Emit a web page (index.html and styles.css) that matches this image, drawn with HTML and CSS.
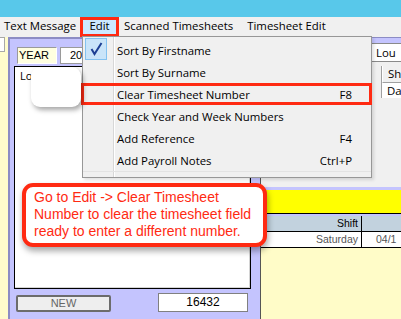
FILE: index.html
```html
<!DOCTYPE html>
<html>
<head>
<meta charset="utf-8">
<link rel="stylesheet" href="styles.css">
</head>
<body>
<div class="screen">
  <div class="titlebar"></div>
  <div class="menubar">
    <span class="mi mi1">Text Message</span>
    <span class="mi edit">Edit</span>
    <span class="mi mi3">Scanned Timesheets</span>
    <span class="mi mi4">Timesheet Edit</span>
  </div>
  <div class="main">
    <div class="strip"><div class="strip-input"></div></div>
    <div class="leftpanel">
      <div class="toprow">
        <div class="yearbox">YEAR</div>
        <div class="yearval">20</div>
      </div>
      <div class="list">
        <div class="list-item">Lo</div>
      </div>
      <div class="bottomrow">
        <div class="newbtn">NEW</div>
        <div class="numbox">16432</div>
      </div>
    </div>
    <div class="rightpanel">
      <div class="rp-top">
        <div class="rp-form"><div class="rp-input">Lou</div></div>
        <div class="grid1">
          <div class="g1-head"><div class="rowhdr"></div><div class="g1-cell hdr">Sh</div></div>
          <div class="g1-row"><div class="rowhdr"></div><div class="g1-cell">Da</div></div>
        </div>
      </div>
      <div class="splitter"></div>
      <div class="rp-bottom">
        <div class="yellowbar"></div>
        <div class="grid2">
          <div class="g2-head"><div class="c1">Shift</div><div class="c2"></div></div>
          <div class="g2-row"><div class="c1 dim">Saturday</div><div class="c2 dim">04/1</div></div>
        </div>
      </div>
    </div>
  </div>

  <div class="dropdown">
    <div class="dd-item">
      <span class="dd-icon"><span class="checkbox"><svg width="22" height="22" viewBox="0 0 22 22"><polyline points="6.5,11 9.5,16 16.5,5" fill="none" stroke="#1d3f94" stroke-width="2"/></svg></span></span>
      <span class="dd-label">Sort By Firstname</span><span class="dd-key"></span>
    </div>
    <div class="dd-item"><span class="dd-icon"></span><span class="dd-label">Sort By Surname</span><span class="dd-key"></span></div>
    <div class="dd-item clear"><span class="dd-icon"></span><span class="dd-label">Clear Timesheet Number</span><span class="dd-key">F8</span></div>
    <div class="dd-item"><span class="dd-icon"></span><span class="dd-label">Check Year and Week Numbers</span><span class="dd-key"></span></div>
    <div class="dd-item"><span class="dd-icon"></span><span class="dd-label">Add Reference</span><span class="dd-key">F4</span></div>
    <div class="dd-item"><span class="dd-icon"></span><span class="dd-label">Add Payroll Notes</span><span class="dd-key">Ctrl+P</span></div>
    <div class="dd-foot"></div>
  </div>

  <div class="bubble"></div>

  <div class="callout">
    <div class="cl">Go to Edit -&gt; Clear Timesheet</div>
    <div class="cl">Number to clear the timesheet field</div>
    <div class="cl">ready to enter a different number.</div>
  </div>
</div>
</body>
</html>
```

FILE: styles.css
```css
html, body {
  margin: 0;
  padding: 0;
}
body {
  width: 401px;
  height: 319px;
  overflow: hidden;
  font-family: "Open Sans", "Noto Sans", sans-serif;
}
.screen {
  position: relative;
  width: 401px;
  height: 319px;
  overflow: hidden;
  background: #f0f0f0;
  display: flex;
  flex-direction: column;
}
.titlebar {
  height: 17px;
  flex: none;
  background: #58c8ea;
}
.menubar {
  height: 18px;
  flex: none;
  display: flex;
  align-items: stretch;
  background: #f0f0f0;
  font-size: 11.4px;
  color: #000;
}
.mi {
  line-height: 18px;
  white-space: nowrap;
}
.mi1 { margin-left: 4px; }
.edit {
  position: relative;
  margin-left: 4px;
  width: 39px;
  text-align: center;
  background: #cce8ff;
}
.edit::after {
  content: "";
  position: absolute;
  left: 0;
  top: 0;
  right: 0;
  bottom: -2px;
  border: 3px solid #ff2a12;
}
.mi3 { margin-left: 5px; }
.mi4 { margin-left: 14px; }

.main {
  flex: 1;
  min-height: 0;
  display: flex;
  padding-top: 2px;
}
.strip {
  width: 8px;
  flex: none;
  background: #fffccc;
}
.strip-input {
  width: 5px;
  height: 15px;
  box-sizing: border-box;
  background: #fff;
  border: 1px solid #a8a8a8;
  border-left: 0;
}
.leftpanel {
  width: 252px;
  flex: none;
  box-sizing: border-box;
  border-left: 2px solid #8c8cc4;
  border-top: 2px solid #8c8cc4;
  background: #c4c4fe;
  padding: 8px 9px 0 4px;
  display: flex;
  flex-direction: column;
}
.toprow {
  display: flex;
  gap: 3px;
  margin-left: 3px;
  height: 17px;
  font-family: "Liberation Sans", sans-serif;
  font-size: 11px;
}
.yearbox {
  width: 40px;
  box-sizing: border-box;
  background: #ffffe0;
  border: 1px solid #9a9a9a;
  border-right-color: #fff;
  border-bottom-color: #fff;
  padding-left: 1px;
  line-height: 15px;
}
.yearval {
  width: 60px;
  box-sizing: border-box;
  background: #fff;
  border: 1px solid #9a9a9a;
  padding-left: 9px;
  line-height: 15px;
}
.list {
  margin-top: 2px;
  height: 223px;
  box-sizing: border-box;
  border: 1px solid #000;
  background: #fff;
  box-shadow: inset -1px -1px 0 #d4d4d4;
}
.list-item {
  font-size: 11px;
  line-height: 14px;
  padding: 2px 0 0 5px;
}
.bottomrow {
  display: flex;
  align-items: flex-start;
  margin-top: 4px;
}
.newbtn {
  margin-left: 2px;
  margin-top: 2px;
  width: 95px;
  height: 17px;
  box-sizing: border-box;
  border: 2px solid #6c6c6c;
  border-radius: 2px;
  background: #eeeeee;
  color: #666;
  font-family: "Liberation Sans", sans-serif;
  font-size: 11px;
  line-height: 13px;
  text-align: center;
}
.numbox {
  margin-left: 47px;
  width: 90px;
  height: 19px;
  box-sizing: border-box;
  border: 1px solid #808080;
  background: #fff;
  font-family: "Liberation Sans", sans-serif;
  font-size: 12px;
  line-height: 17px;
  text-align: center;
}

.rightpanel {
  flex: 1;
  min-width: 0;
  border-left: 1px solid #555;
  display: flex;
  flex-direction: column;
}
.rp-top {
  height: 140px;
  flex: none;
  background: #f0f0f0;
}
.rp-form {
  height: 25px;
  box-sizing: border-box;
  background: #c4c4fe;
  border-top: 1px solid #8c8cc4;
  padding: 5px 0 0 109px;
}
.rp-input {
  height: 19px;
  box-sizing: border-box;
  background: #fff;
  border: 1px solid #8a8a8a;
  border-right: 0;
  padding-left: 5px;
  font-size: 11.4px;
  line-height: 17px;
  white-space: nowrap;
}
.grid1 {
  margin-top: 4px;
  font-size: 11.4px;
}
.g1-head, .g1-row {
  display: flex;
  white-space: nowrap;
}
.g1-head { height: 17px; }
.g1-row { height: 15px; }
.rowhdr {
  width: 121px;
  flex: none;
  box-sizing: border-box;
  border-right: 1px solid #a0a0a0;
  background: #f0f0f0;
}
.g1-cell {
  flex: 1;
  padding-left: 5px;
  background: #fff;
  line-height: 15px;
}
.g1-cell.hdr {
  background: #f0f0f0;
  border-left: 1px solid #fff;
  border-bottom: 1px solid #a0a0a0;
  line-height: 16px;
}
.splitter {
  height: 10px;
  flex: none;
  background: #f0f0f0;
}
.rp-bottom {
  flex: 1;
  background: #fffcc8;
  border-top: 3px solid #c4c4fe;
}
.yellowbar {
  height: 23px;
  background: #ffff00;
  border-bottom: 1px solid #000;
}
.grid2 {
  border-top: 2px solid #c4c4fe;
  font-family: "Liberation Sans", sans-serif;
  font-size: 10.5px;
}
.g2-head, .g2-row {
  display: flex;
  height: 16px;
  box-sizing: border-box;
  border-bottom: 1px solid #000;
  white-space: nowrap;
  line-height: 15px;
}
.g2-head { background: #c2d2de; }
.g2-row { background: #fff; }
.c1 {
  width: 101px;
  flex: none;
  box-sizing: border-box;
  border-right: 1px solid #000;
  text-align: right;
  padding-right: 3px;
}
.c2 {
  flex: 1;
  padding-left: 14px;
}
.dim { color: #555; }

.dropdown {
  position: absolute;
  left: 82px;
  top: 36px;
  width: 290px;
  height: 142px;
  box-sizing: border-box;
  border: 1px solid #979797;
  padding-top: 2px;
  background: linear-gradient(to right, #f0f0f0 30px, #d7d7d7 30px, #d7d7d7 31px, #fff 31px, #fff 32px, #f0f0f0 32px);
  font-size: 11.4px;
  color: #000;
  box-shadow: 2px 2px 3px rgba(0, 0, 0, 0.12);
}
.dd-item {
  position: relative;
  display: flex;
  align-items: center;
  height: 22px;
  white-space: nowrap;
}
.dd-icon {
  width: 34px;
  flex: none;
}
.dd-label { flex: 1; }
.dd-key { padding-right: 19px; }
.checkbox {
  position: absolute;
  left: 2px;
  top: -1px;
  width: 22px;
  height: 22px;
  box-sizing: border-box;
  background: #c9e4f9;
  border: 1px solid #84c2f0;
}
.checkbox svg {
  display: block;
  margin: -1px;
}
.clear::after {
  content: "";
  position: absolute;
  left: -2px;
  right: -1px;
  top: 0;
  bottom: 0;
  border: 3px solid #ff2a12;
}
.dd-foot {
  border-top: 1px solid #e3e3e3;
}

.bubble {
  position: absolute;
  left: 31px;
  top: 67px;
  width: 50px;
  height: 40px;
  border-radius: 9px;
  background: #fff;
  box-shadow: 2px 3px 5px rgba(0, 0, 0, 0.35);
}

.callout {
  position: absolute;
  left: 22px;
  top: 183px;
  width: 245px;
  height: 64px;
  box-sizing: border-box;
  border: 4px solid #ff2a12;
  border-radius: 11px;
  background: #fff;
  padding: 2px 0 0 8px;
  font-family: "Liberation Sans", Arial, sans-serif;
  font-size: 14px;
  line-height: 17px;
  color: #ff2a12;
  box-shadow: 1px 4px 6px rgba(0, 0, 0, 0.35);
}
.cl { white-space: nowrap; }
```
